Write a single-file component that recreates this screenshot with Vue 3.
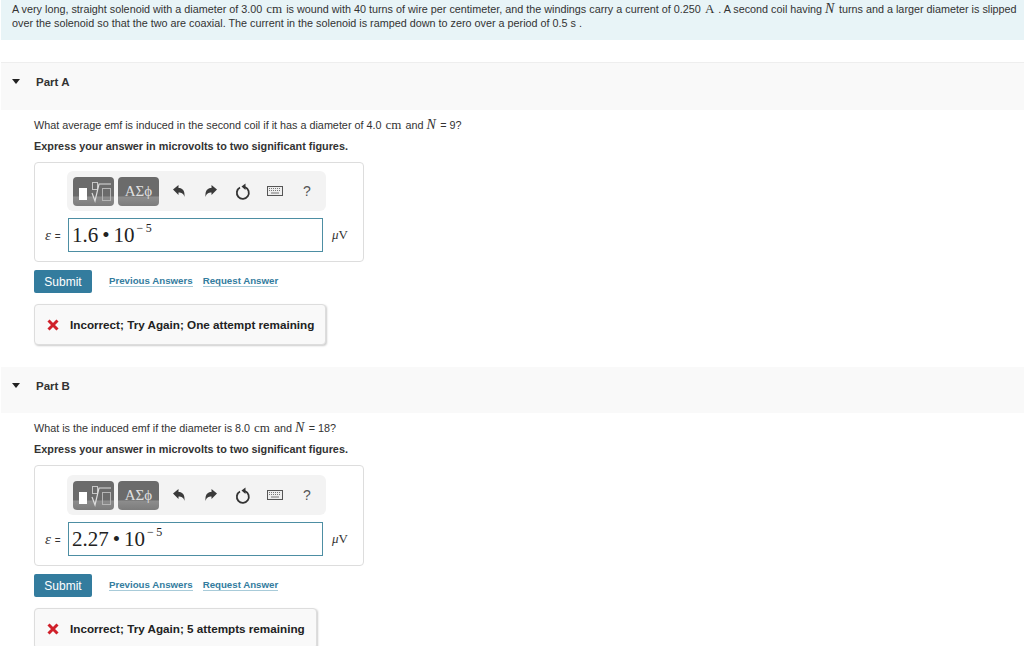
<template>
  <div class="page">
    <div class="intro">
      A very long, straight solenoid with a diameter of 3.00 <span class="math">cm</span> is wound with 40 turns of wire per centimeter, and the windings carry a current of 0.250 <span class="math">A</span> . A second coil having <i class="math math--n">N</i> turns and a larger diameter is slipped over the solenoid so that the two are coaxial. The current in the solenoid is ramped down to zero over a period of 0.5 s .
    </div>

    <section v-for="part in parts" :key="part.name" class="part" :class="part.modifier">
      <div class="part__header">
        <span class="part__arrow"></span>
        <strong>{{ part.name }}</strong>
      </div>
      <div class="part__body">
        <p class="question">
          {{ part.before }} <span class="math">cm</span> and <i class="math math--n">N</i> = {{ part.n }}?
        </p>
        <p class="hint">Express your answer in microvolts to two significant figures.</p>

        <div class="editor">
          <div class="toolbar">
            <button class="tool tool--templates">
              <svg width="41" height="29" viewBox="0 0 41 29">
                <rect x="6" y="11" width="8" height="12" fill="#fff" />
                <rect x="19.500" y="5.500" width="5" height="7" fill="none" stroke="#c8c8c8" />
                <path d="M19 16l3 8 4-17h12" fill="none" stroke="#ddd" stroke-width="1.200" />
                <rect x="29.500" y="11.500" width="8" height="12" fill="none" stroke="#b5b5b5" />
              </svg>
            </button>
            <button class="tool tool--symbols">ΑΣϕ</button>
            <div class="actions">
              <span class="action">
                <svg width="14" height="14" viewBox="0 0 14 14">
                  <path d="M1 5.500L6.500 1v3c4 0 6.500 2.500 6 9-1-3.500-3-4.500-6-4.500V11z" fill="#3a3a3a" />
                </svg>
              </span>
              <span class="action">
                <svg width="14" height="14" viewBox="0 0 14 14">
                  <path d="M13 5.500L7.500 1v3c-4 0-6.500 2.500-6 9 1-3.500 3-4.500 6-4.500V11z" fill="#3a3a3a" />
                </svg>
              </span>
              <span class="action">
                <svg width="16" height="17" viewBox="0 0 16 17">
                  <path d="M5 4.500a6 6 0 1 0 5-.3" fill="none" stroke="#333" stroke-width="1.800" />
                  <path d="M10.500 0.500L6.500 3.500l4 3.500z" fill="#333" />
                </svg>
              </span>
              <span class="action">
                <svg width="16" height="10" viewBox="0 0 16 10">
                  <rect x=".5" y=".5" width="15" height="9" fill="#eee" stroke="#555" />
                  <path d="M2 2.500h12M2 4.500h12" stroke="#777" stroke-dasharray="1 1" />
                  <path d="M4 7h8" stroke="#777" />
                </svg>
              </span>
              <span class="action help">?</span>
            </div>
          </div>
          <div class="answer-row">
            <span class="answer-label"><i>ε</i> <small>=</small></span>
            <div class="answer-input">
              {{ part.value }}<span class="dot">•</span>10<sup>−&thinsp;5</sup>
            </div>
            <span class="unit"><i>μ</i>V</span>
          </div>
        </div>

        <div class="submit-row">
          <button class="submit">Submit</button>
          <a class="link">Previous Answers</a>
          <a class="link">Request Answer</a>
        </div>

        <div class="feedback">
          <svg width="12" height="12" viewBox="0 0 12 12">
            <path d="M1.500 1.500l9 9M10.500 1.500l-9 9" stroke="#d0202a" stroke-width="3" />
          </svg>
          <strong>{{ part.feedback }}</strong>
        </div>
      </div>
    </section>
  </div>
</template>

<script setup>
const parts = [
  {
    name: 'Part A',
    modifier: 'part--a',
    before: 'What average emf is induced in the second coil if it has a diameter of 4.0',
    n: 9,
    value: '1.6',
    feedback: 'Incorrect; Try Again; One attempt remaining'
  },
  {
    name: 'Part B',
    modifier: 'part--b',
    before: 'What is the induced emf if the diameter is 8.0',
    n: 18,
    value: '2.27',
    feedback: 'Incorrect; Try Again; 5 attempts remaining'
  }
]
</script>

<style>
html,
body {
  margin: 0;
  background: #fff;
  overflow: hidden;
}
</style>

<style scoped>
.page {
  height: 646px;
  overflow: hidden;
  font-family: 'Liberation Sans', Arial, sans-serif;
  font-size: 10.8px;
  color: #333;
}

.math {
  margin: 0 1px;
  font-family: 'Liberation Serif', serif;
  font-size: 13px;
}

.math--n {
  margin: 0 1.500px 0 0;
  font-size: 14px;
}

.intro {
  margin-left: 1px;
  height: 40px;
  box-sizing: border-box;
  padding: 2px 2px 0 11px;
  line-height: 13.500px;
  background: #e8f4f7;
}

.intro .math {
  line-height: 1;
}

.part__header {
  display: flex;
  gap: 16px;
  height: 46px;
  box-sizing: border-box;
  margin-left: 1px;
  padding: 12px 0 0 11px;
  font-size: 11.500px;
  line-height: 14px;
  background: #f9f9f9;
}

.part--a .part__header {
  height: 48px;
  margin-top: 22px;
  border-top: 1px solid #eee;
}

.part__arrow {
  width: 0;
  height: 0;
  margin-top: 4px;
  border-left: 4.500px solid transparent;
  border-right: 4.500px solid transparent;
  border-top: 5px solid #222;
}

.part__body {
  height: 257px;
  box-sizing: border-box;
  padding: 8px 0 0 34px;
}

.question {
  margin: 0;
  line-height: 14px;
}

.hint {
  margin: 8px 0 0;
  font-size: 10.850px;
  font-weight: 700;
  line-height: 13px;
}

.editor {
  width: 330px;
  height: 100px;
  box-sizing: border-box;
  margin-top: 9px;
  padding-top: 8px;
  border: 1px solid #ddd;
  border-radius: 4px;
}

.part--b .editor {
  height: 101px;
  padding-top: 9px;
}

.toolbar {
  display: flex;
  align-items: center;
  width: 259px;
  height: 40px;
  box-sizing: border-box;
  margin-left: 32px;
  padding-left: 6px;
  border-radius: 6px;
  background: #f3f3f3;
}

.tool {
  height: 29px;
  padding: 0;
  border: 0;
  border-radius: 4px;
  color: #e0e0e0;
  background: linear-gradient(#6b6b6b 0 64%, #8c8c8c 70%, #7c7c7c);
}

.tool svg {
  display: block;
}

.tool--templates {
  width: 41px;
  margin-right: 4px;
}

.tool--symbols {
  width: 41px;
  font-family: 'Liberation Serif', 'DejaVu Serif', serif;
  font-size: 15px;
}

.actions {
  display: flex;
  align-items: center;
  margin-left: 4px;
}

.action {
  display: flex;
  justify-content: center;
  align-items: center;
  width: 32px;
}

.help {
  font-size: 14px;
  color: #555;
}

.answer-row {
  display: flex;
  align-items: center;
  margin-top: 7px;
}

.answer-label {
  width: 33px;
  box-sizing: border-box;
  padding-left: 10px;
  font-family: 'Liberation Serif', serif;
  font-size: 15px;
  white-space: nowrap;
}

.answer-label small {
  font-family: 'Liberation Sans', sans-serif;
  font-size: 10px;
}

.answer-input {
  width: 255px;
  height: 34px;
  box-sizing: border-box;
  padding: 3px 0 0 3px;
  border: 1px solid #4d8ea3;
  font-family: 'Liberation Serif', serif;
  font-size: 21px;
  line-height: 26px;
  color: #222;
  white-space: nowrap;
}

.dot {
  margin: 0 4px;
}

sup {
  position: relative;
  top: -10px;
  margin-left: 2px;
  font-size: 12px;
  line-height: 0;
  vertical-align: baseline;
}

.unit {
  margin-left: 9px;
  font-family: 'Liberation Serif', serif;
  font-size: 13px;
}

.submit-row {
  display: flex;
  align-items: center;
  margin-top: 8px;
}

.submit {
  width: 58px;
  height: 23px;
  margin-right: 17px;
  padding: 0;
  border: 0;
  border-radius: 2px;
  font-family: inherit;
  font-size: 12px;
  color: #fff;
  background: #337c9e;
}

.link {
  margin-right: 10px;
  font-size: 9.700px;
  font-weight: 700;
  color: #337c9e;
  border-bottom: 1px solid #a8cbd9;
  line-height: 10px;
}

.feedback {
  display: inline-flex;
  align-items: center;
  gap: 11px;
  height: 41px;
  box-sizing: border-box;
  margin-top: 11px;
  padding: 0 11px 0 12px;
  border: 1px solid #ddd;
  border-radius: 4px;
  font-size: 11.700px;
  color: #222;
  background: #f9f9f9;
  box-shadow: 1px 1px 2px rgba(0, 0, 0, 0.2);
}
</style>
